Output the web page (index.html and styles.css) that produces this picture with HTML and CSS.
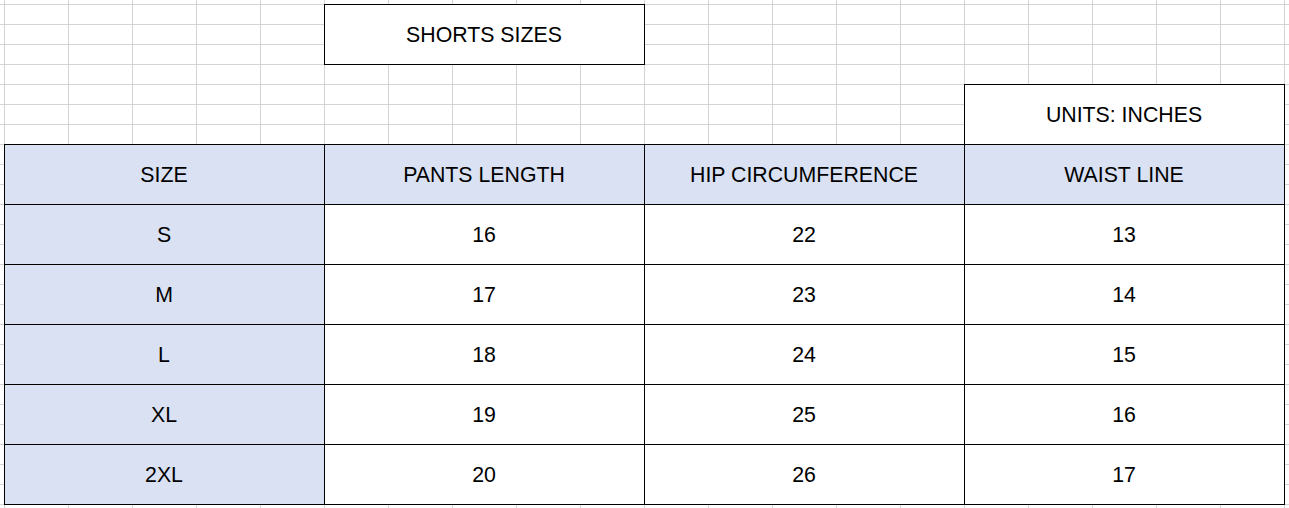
FILE: index.html
```html
<!DOCTYPE html>
<html lang="en">
<head>
<meta charset="utf-8">
<title>Shorts Sizes</title>
<link rel="stylesheet" href="styles.css">
</head>
<body>
<div class="sheet">
  <div class="cell title">SHORTS SIZES</div>
  <div class="cell units">UNITS: INCHES</div>

  <div class="cell head c1 r1">SIZE</div>
  <div class="cell head c2 r1">PANTS LENGTH</div>
  <div class="cell head c3 r1">HIP CIRCUMFERENCE</div>
  <div class="cell head c4 r1">WAIST LINE</div>

  <div class="cell head c1 r2">S</div>
  <div class="cell c2 r2">16</div>
  <div class="cell c3 r2">22</div>
  <div class="cell c4 r2">13</div>

  <div class="cell head c1 r3">M</div>
  <div class="cell c2 r3">17</div>
  <div class="cell c3 r3">23</div>
  <div class="cell c4 r3">14</div>

  <div class="cell head c1 r4">L</div>
  <div class="cell c2 r4">18</div>
  <div class="cell c3 r4">24</div>
  <div class="cell c4 r4">15</div>

  <div class="cell head c1 r5">XL</div>
  <div class="cell c2 r5">19</div>
  <div class="cell c3 r5">25</div>
  <div class="cell c4 r5">16</div>

  <div class="cell head c1 r6">2XL</div>
  <div class="cell c2 r6">20</div>
  <div class="cell c3 r6">26</div>
  <div class="cell c4 r6">17</div>
</div>
</body>
</html>
```

FILE: styles.css
```css
html, body {
  margin: 0;
  padding: 0;
  height: 100%;
}

body {
  background-color: #fff;
  background-image:
    linear-gradient(to right, #d3d3d3 0, #d3d3d3 1px, transparent 1px),
    linear-gradient(to bottom, #d3d3d3 0, #d3d3d3 1px, transparent 1px);
  background-size: 64px 20px;
  background-position: 4px 4px;
  font-family: "Liberation Sans", Arial, sans-serif;
  color: #000;
  overflow: hidden;
}

.sheet {
  display: grid;
  grid-template-columns: repeat(20, 64px);
  grid-auto-rows: 20px;
  padding: 4px 0 0 4px;
}

.cell {
  display: flex;
  align-items: center;
  justify-content: center;
  background: #fff;
  border: 1px solid #000;
  margin: 0 -1px -1px 0;
  padding: 2px 1px 0 0;
  font-size: 21.3px;
  line-height: 1;
  grid-row-end: span 3;
  grid-column-end: span 5;
}

.head {
  background: #d9e1f3;
}

.title { grid-column-start: 6; grid-row-start: 1; }
.units { grid-column-start: 16; grid-row-start: 5; }

.c1 { grid-column-start: 1; }
.c2 { grid-column-start: 6; }
.c3 { grid-column-start: 11; }
.c4 { grid-column-start: 16; }

.r1 { grid-row-start: 8; }
.r2 { grid-row-start: 11; }
.r3 { grid-row-start: 14; }
.r4 { grid-row-start: 17; }
.r5 { grid-row-start: 20; }
.r6 { grid-row-start: 23; }
```
